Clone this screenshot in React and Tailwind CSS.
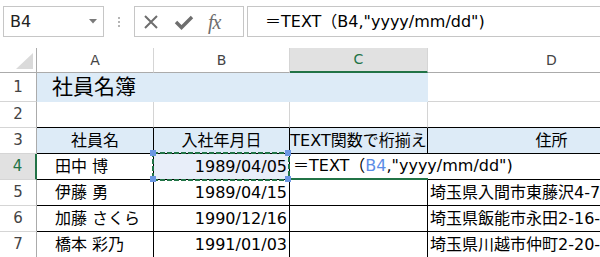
import React from "react";

const FONT = "font-['DejaVu_Sans','Noto_Sans_CJK_JP',sans-serif]";

function ColHead({ label, active }) {
  if (active) {
    return (
      <div className="box-border border-r border-r-[#d5d5d5] border-b-2 border-b-[#217346] bg-[#e1e1e1] flex items-center justify-center text-[14px] text-[#217346]">
        {label}
      </div>
    );
  }
  return (
    <div className="box-border border-r border-r-[#d5d5d5] border-b border-b-[#ababab] flex items-center justify-center text-[14px] text-[#444]">
      {label}
    </div>
  );
}

function RowHead({ n, active }) {
  if (active) {
    return (
      <div className="box-border border-r-2 border-r-[#217346] border-b border-b-[#d5d5d5] bg-[#e1e1e1] flex items-center justify-center text-[15px] text-[#217346]">
        {n}
      </div>
    );
  }
  return (
    <div className="box-border border-r border-r-[#ababab] border-b border-b-[#d5d5d5] flex items-center justify-center text-[15px] text-[#444]">
      {n}
    </div>
  );
}

const cellBase =
  "box-border border-r border-b border-r-black border-b-black flex items-center whitespace-nowrap text-[16px] text-black";

export default function App() {
  const rows = [
    { n: 5, name: "伊藤 勇", date: "1989/04/15", addr: "埼玉県入間市東藤沢4-7-1" },
    { n: 6, name: "加藤 さくら", date: "1990/12/16", addr: "埼玉県飯能市永田2-16-3" },
    { n: 7, name: "橋本 彩乃", date: "1991/01/03", addr: "埼玉県川越市仲町2-20-5" },
  ];

  return (
    <div className={`w-[600px] h-[257px] overflow-hidden bg-white ${FONT} text-black`}>
      {/* Formula bar */}
      <div className="flex h-[48px] items-start pt-[6px]">
        <div className="ml-[3px] w-[101px] h-[31px] box-border border border-[#c6c6c6] flex items-center justify-between pl-[6px] pr-[6px]">
          <span className="text-[16px] text-[#222]">B4</span>
          <svg width="8" height="5" viewBox="0 0 8 5">
            <polygon points="0,0 8,0 4,4.5" fill="#7a7a7a" />
          </svg>
        </div>
        <div className="w-[30px] h-[31px] flex flex-col items-center justify-center gap-[2px]">
          <div className="w-[2px] h-[2px] bg-[#b5b5b5]" />
          <div className="w-[2px] h-[2px] bg-[#b5b5b5]" />
          <div className="w-[2px] h-[2px] bg-[#b5b5b5]" />
        </div>
        <div className="w-[110px] h-[31px] box-border border border-[#c6c6c6] flex items-center">
          <svg width="14" height="14" viewBox="0 0 14 14" className="ml-[9px]">
            <path d="M1 1 L13 13 M13 1 L1 13" stroke="#6e6e6e" strokeWidth="2" fill="none" />
          </svg>
          <svg width="20" height="16" viewBox="0 0 20 16" className="ml-[16px]">
            <path d="M2 8 L7.5 13.5 L18 3" stroke="#6e6e6e" strokeWidth="3.4" fill="none" strokeLinejoin="miter" />
          </svg>
          <span className="ml-[14px] font-['Liberation_Serif',serif] italic text-[20px] leading-none text-[#6e6e6e] tracking-[-1px]">
            fx
          </span>
        </div>
        <div className="ml-[3px] flex-1 h-[31px] box-border border-y border-l border-[#c6c6c6] flex items-center pl-[17px] text-[16px] whitespace-nowrap">
          ＝TEXT（B4,"yyyy/mm/dd")
        </div>
      </div>

      {/* Grid */}
      <div className="grid grid-cols-[37px_117px_136px_138px_248px] grid-rows-[25px_29px_26px_26px_26px_26px_26px_26px]">
        {/* header row */}
        <div className="box-border border-r border-r-[#ababab] border-b border-b-[#ababab]">
          <svg width="36" height="24" viewBox="0 0 36 24">
            <polygon points="16,21 33,5 33,21" fill="#dadada" />
          </svg>
        </div>
        <ColHead label="A" />
        <ColHead label="B" />
        <ColHead label="C" active />
        <ColHead label="D" />

        {/* row 1 */}
        <RowHead n={1} />
        <div className="col-span-3 bg-[#ddebf7] flex items-center pl-[15px] text-[21px] whitespace-nowrap">
          社員名簿
        </div>
        <div className="box-border border-r border-b border-[#d4d4d4]" />

        {/* row 2 */}
        <RowHead n={2} />
        <div className="box-border border-r border-r-[#d4d4d4] border-b border-b-black" />
        <div className="box-border border-r border-r-[#d4d4d4] border-b border-b-black" />
        <div className="box-border border-r border-r-[#d4d4d4] border-b border-b-black" />
        <div className="box-border border-r border-r-[#d4d4d4] border-b border-b-black" />

        {/* row 3 */}
        <RowHead n={3} />
        <div className={`${cellBase} bg-[#ddebf7] justify-center`}>社員名</div>
        <div className={`${cellBase} bg-[#ddebf7] justify-center`}>入社年月日</div>
        <div className={`${cellBase} bg-[#ddebf7] justify-center`}>TEXT関数で桁揃え</div>
        <div className={`${cellBase} bg-[#ddebf7] justify-center`}>住所</div>

        {/* row 4 */}
        <RowHead n={4} active />
        <div className={`${cellBase} pl-[18px]`}>田中 博</div>
        <div className={`${cellBase} relative z-20 bg-[#e8eef9] justify-end pr-[2px]`}>
          1989/04/05
          <div className="absolute left-[-2px] top-[-2px] right-0 bottom-[-1px]">
            <svg className="absolute inset-0" width="138" height="29" viewBox="0 0 138 29">
              <rect x="1" y="1" width="136" height="27" fill="none" stroke="#217346" strokeWidth="2" strokeDasharray="5 2" />
            </svg>
            <div className="absolute left-[-2px] top-[-2px] w-[6px] h-[6px] bg-[#6b97e3]" />
            <div className="absolute right-[-2px] top-[-2px] w-[6px] h-[6px] bg-[#6b97e3]" />
            <div className="absolute left-[-2px] bottom-[-2px] w-[6px] h-[6px] bg-[#6b97e3]" />
            <div className="absolute right-[-2px] bottom-[-2px] w-[6px] h-[6px] bg-[#6b97e3]" />
          </div>
        </div>
        <div className="box-border border-b-2 border-b-[#217346] relative z-10 flex items-center whitespace-nowrap text-[16px] pl-[3px]">
          <span>＝TEXT（</span>
          <span className="text-[#5b8de6]">B4</span>
          <span>,"yyyy/mm/dd")</span>
          <span className="inline-block w-[1px] h-[20px] bg-black ml-[2px]" />
        </div>
        <div className="box-border border-r border-b border-r-black border-b-black bg-white" />

        {/* rows 5-7 */}
        {rows.map((r) => (
          <React.Fragment key={r.n}>
            <RowHead n={r.n} />
            <div className={`${cellBase} pl-[18px]`}>{r.name}</div>
            <div className={`${cellBase} justify-end pr-[2px]`}>{r.date}</div>
            <div className={cellBase} />
            <div className={`${cellBase} pl-[2px]`}>{r.addr}</div>
          </React.Fragment>
        ))}
      </div>
    </div>
  );
}
